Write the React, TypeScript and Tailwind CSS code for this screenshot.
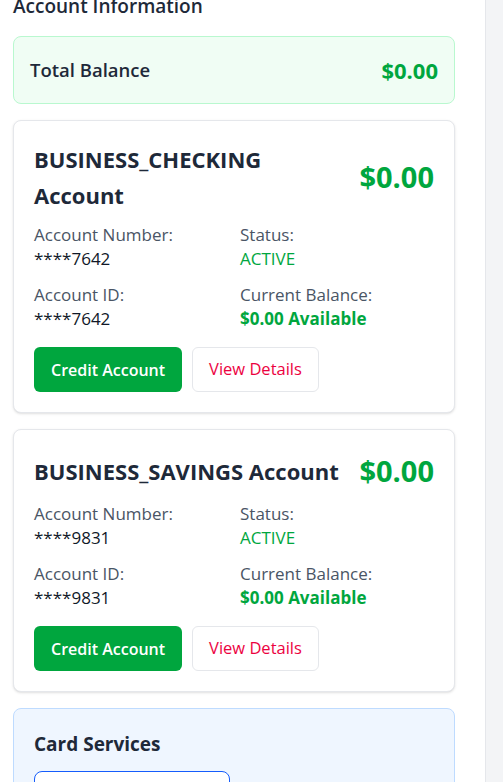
const accounts = [
  { type: "BUSINESS_CHECKING", last4: "7642" },
  { type: "BUSINESS_SAVINGS", last4: "9831" },
];

const Field = ({ label, children }: { label: string; children: React.ReactNode }) => (
  <div>
    <p className="text-[17px] leading-6 text-gray-600">{label}</p>
    {children}
  </div>
);

const AccountCard = ({ type, last4 }: { type: string; last4: string }) => {
  return (
    <div className="rounded-lg border border-gray-200 bg-white p-5 shadow-sm">
      <div className="mb-2.5 flex items-center justify-between gap-4">
        <h3 className="text-[22px] font-bold leading-9 text-gray-800">{type} Account</h3>
        <p className="shrink-0 text-[29px] font-bold leading-[42px] text-green-600">$0.00</p>
      </div>
      <div className="grid grid-cols-2 gap-3">
        <Field label="Account Number:">
          <p className="text-[17px] leading-6 text-gray-900">****{last4}</p>
        </Field>
        <Field label="Status:">
          <p className="text-[17px] leading-6 text-green-600">ACTIVE</p>
        </Field>
        <Field label="Account ID:">
          <p className="text-[17px] leading-6 text-gray-900">****{last4}</p>
        </Field>
        <Field label="Current Balance:">
          <p className="text-[17px] font-bold leading-6 text-green-600">$0.00 Available</p>
        </Field>
      </div>
      <div className="mt-4 flex gap-2.5">
        <button className="h-[45px] rounded-md bg-green-600 px-[17px] text-[16px] font-semibold text-white">
          Credit Account
        </button>
        <button className="h-[45px] rounded-md border border-gray-200 bg-white px-4 text-[16.5px] text-rose-600">
          View Details
        </button>
      </div>
    </div>
  );
};

export default function App() {
  return (
    <div className="flex min-h-screen overflow-hidden bg-gray-100 font-['Open_Sans',sans-serif]">
      <main className="w-[485px] shrink-0 bg-white pb-10 pl-[13px] pr-[30px]">
        <div className="-mt-[8px]">
          <h2 className="mb-4 text-[19px] font-semibold leading-7 text-gray-800">Account Information</h2>
          <div className="mb-4 flex items-center justify-between rounded-lg border border-green-200 bg-green-50 px-4 py-5">
            <span className="text-[18.5px] font-semibold leading-[26px] text-gray-800">Total Balance</span>
            <span className="text-[22px] font-bold leading-[26px] text-green-600">$0.00</span>
          </div>
          <div className="space-y-4">
            {accounts.map((a) => (
              <AccountCard key={a.type} type={a.type} last4={a.last4} />
            ))}
            <div className="rounded-lg border border-blue-200 bg-blue-50 p-5">
              <h3 className="mb-3 text-[19px] font-bold leading-[30px] text-gray-800">Card Services</h3>
              <div className="h-24 w-[196px] rounded-lg border border-blue-600 bg-white" />
            </div>
          </div>
        </div>
      </main>
      <aside className="flex-1 border-l border-gray-200 bg-gray-100" />
    </div>
  );
}
